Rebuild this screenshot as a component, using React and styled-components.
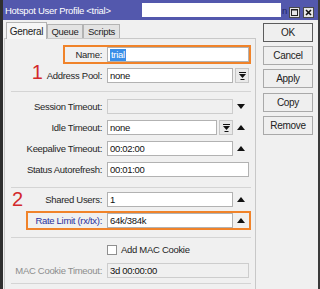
import React from "react";
import styled, { createGlobalStyle } from "styled-components";

const GlobalStyle = createGlobalStyle`
  html, body {
    margin: 0;
    padding: 0;
    background: #f0f0f0;
  }
  body {
    font-family: "Liberation Sans", Arial, sans-serif;
    font-size: 9.5px;
    letter-spacing: -0.3px;
    color: #1e1e1e;
  }
`;

const Window = styled.div`
    width: 320px;
    height: 289px;
    box-sizing: border-box;
    border-left: 3px solid #2f2f2f;
    border-right: 2px solid #3a3a3a;
    background: #f0f0f0;
    overflow: hidden;
    display: flex;
    flex-direction: column;
`;

const TitleBar = styled.div`
    height: 20px;
    flex-shrink: 0;
    background: #5358ad;
    display: flex;
    align-items: center;
    padding: 0 4px 0 2px;
`;

const TitleText = styled.div`
    color: #ffffff;
    white-space: nowrap;
`;

const TitleField = styled.div`
    margin-left: auto;
    width: 139px;
    height: 14px;
    background: #ffffff;
`;

const TitleTail = styled.div`
    color: #1f2466;
    margin-left: 1px;
    width: 6px;
`;

const WinButtons = styled.div`
    display: flex;
    gap: 3px;
    margin-left: 1px;
    align-self: flex-start;
    margin-top: 7px;
`;

const WinButton = styled.div`
    width: 11px;
    height: 11px;
    box-sizing: border-box;
    border: 1px solid #4a4a4a;
    background: #e6e6e6;
    display: flex;
    align-items: center;
    justify-content: center;
`;

const Body = styled.div`
    display: flex;
    flex: 1;
    min-height: 0;
`;

const Main = styled.div`
    width: 252px;
    margin-left: 1px;
    display: flex;
    flex-direction: column;
`;

const Tabs = styled.div`
    display: flex;
    align-items: flex-end;
    height: 17px;
    margin: 2px 0 -1px;
    padding-left: 2px;
    position: relative;
    z-index: 1;
`;

const Tab = styled.div`
    width: ${p => p.$width}px;
    height: ${p => p.$active ? 17 : 14}px;
    margin-bottom: ${p => p.$active ? 0 : 1}px;
    box-sizing: border-box;
    border: 1px solid #b3b3b3;
    border-bottom: none;
    background: ${p => p.$active ? "#f6f6f6" : "#e3e3e3"};
    display: flex;
    align-items: center;
    justify-content: center;
    font-size: ${p => p.$active ? "10px" : "9.5px"};
`;

const Panel = styled.div`
    flex: 1;
    border: 1px solid #c8c8c8;
    border-bottom: none;
    background: #f0f0f0;
    padding-top: 6px;
    display: flex;
    flex-direction: column;
`;

const Section = styled.div`
    display: flex;
    flex-direction: column;
    gap: 2px;
`;

const Separator = styled.div`
    height: 1px;
    background: #d4d4d4;
    margin: ${p => p.$above}px 4px ${p => p.$below}px 6px;
    flex-shrink: 0;
`;

const Field = styled.div`
    display: flex;
    align-items: center;
    height: 19px;
    flex-shrink: 0;
    box-sizing: border-box;
    margin: 0 4px 0 ${p => p.$left - 5}px;
    border: 2px solid ${p => p.$marked ? "#f0832a" : "transparent"};
`;

const Label = styled.div`
    width: ${p => 100 - p.$left}px;
    height: 15px;
    flex-shrink: 0;
    display: flex;
    align-items: center;
    justify-content: flex-end;
    white-space: nowrap;
    color: ${p => p.$tone === "link" ? "#2b309c" : p.$tone === "muted" ? "#8d8d8d" : "#262626"};
`;

const Mark = styled.span`
    font-size: 20px;
    line-height: 15px;
    letter-spacing: 0;
    color: #d3292b;
    position: relative;
    top: ${p => p.$raise ? -p.$raise : 0}px;
    margin-right: ${p => p.$far ? "auto" : "4px"};
    margin-left: ${p => p.$far ? "2px" : 0};
`;

const Controls = styled.div`
    flex: 1;
    height: 15px;
    margin-left: 5px;
    display: flex;
    align-items: center;
`;

const Input = styled.div`
    flex: 1;
    height: 15px;
    box-sizing: border-box;
    border: 1px solid ${p => p.$disabled ? "#cdcdcd" : "#b2b2b2"};
    background: ${p => p.$disabled ? "#f0f0f0" : "#ffffff"};
    display: flex;
    align-items: center;
    padding-left: 2px;
    white-space: nowrap;
    overflow: hidden;
    color: #111;
`;

const Selected = styled.span`
    background: #3a8ee8;
    color: #ffffff;
    padding: 0 1px;
    line-height: 12px;
`;

const DropButton = styled.div`
    width: 14px;
    height: 15px;
    margin-left: 2px;
    box-sizing: border-box;
    border: 1px solid #c6c6c6;
    background: #e9e9e9;
    display: flex;
    align-items: center;
    justify-content: center;
    flex-shrink: 0;
`;

const ArrowSlot = styled.div`
    width: 16px;
    height: 15px;
    display: flex;
    align-items: center;
    justify-content: center;
    flex-shrink: 0;
`;

const Checkbox = styled.div`
    width: 10px;
    height: 10px;
    box-sizing: border-box;
    border: 1px solid #8f8f8f;
    background: #ffffff;
    flex-shrink: 0;
`;

const CheckText = styled.span`
    margin-left: 4px;
    white-space: nowrap;
`;

const Side = styled.div`
    display: flex;
    flex-direction: column;
    gap: 4px;
    padding: 3px 0 0 7px;
`;

const Button = styled.div`
    width: 50px;
    height: 19px;
    box-sizing: border-box;
    border: 1px solid ${p => p.$primary ? "#5c5c5c" : "#a9a9a9"};
    background: #efefef;
    display: flex;
    align-items: center;
    justify-content: center;
    font-size: 10px;
    color: #222;
    margin-top: ${p => p.$spaced ? 1 : 0}px;
`;

const DropIcon = () => (
    <svg width="7" height="8" viewBox="0 0 7 8">
        <rect x="0" y="0" width="7" height="1" fill="#111" />
        <polygon points="0,2 7,2 3.5,6" fill="#111" />
        <rect x="1.5" y="7" width="4" height="1" fill="#111" />
    </svg>
);

const Arrow = ({ up }) => (
    <ArrowSlot>
        <svg width="8" height="5" viewBox="0 0 8 5">
            <polygon points={up ? "0,5 8,5 4,0" : "0,0 8,0 4,5"} fill="#111" />
        </svg>
    </ArrowSlot>
);

const App = () => {
    return (
        <Window>
            <GlobalStyle />
            <TitleBar>
                <TitleText>Hotspot User Profile &lt;trial&gt;</TitleText>
                <TitleField />
                <TitleTail>n</TitleTail>
                <WinButtons>
                    <WinButton>
                        <svg width="7" height="7" viewBox="0 0 7 7">
                            <rect x="0.5" y="0.5" width="6" height="6" fill="none" stroke="#222" />
                            <rect x="0.5" y="0.5" width="6" height="1" fill="#222" />
                        </svg>
                    </WinButton>
                    <WinButton>
                        <svg width="7" height="7" viewBox="0 0 7 7">
                            <path d="M1 1 L6 6 M6 1 L1 6" stroke="#111" strokeWidth="1.6" />
                        </svg>
                    </WinButton>
                </WinButtons>
            </TitleBar>

            <Body>
                <Main>
                    <Tabs>
                        <Tab $active $width={41}>General</Tab>
                        <Tab $width={36}>Queue</Tab>
                        <Tab $width={37}>Scripts</Tab>
                    </Tabs>
                    <Panel>
                        <Section>
                            <Field $left={63} $marked>
                                <Label $left={63}>Name:</Label>
                                <Controls>
                                    <Input><Selected>trial</Selected></Input>
                                </Controls>
                            </Field>
                            <Field $left={8}>
                                <Label $left={8}><Mark $raise={3}>1</Mark>Address Pool:</Label>
                                <Controls>
                                    <Input>none</Input>
                                    <DropButton><DropIcon /></DropButton>
                                </Controls>
                            </Field>
                        </Section>

                        <Separator $above={6} $below={5} />

                        <Section>
                            <Field $left={8}>
                                <Label $left={8}>Session Timeout:</Label>
                                <Controls>
                                    <Input $disabled />
                                    <Arrow />
                                </Controls>
                            </Field>
                            <Field $left={8}>
                                <Label $left={8}>Idle Timeout:</Label>
                                <Controls>
                                    <Input>none</Input>
                                    <DropButton><DropIcon /></DropButton>
                                    <Arrow up />
                                </Controls>
                            </Field>
                            <Field $left={8}>
                                <Label $left={8}>Keepalive Timeout:</Label>
                                <Controls>
                                    <Input>00:02:00</Input>
                                    <Arrow up />
                                </Controls>
                            </Field>
                            <Field $left={8}>
                                <Label $left={8}>Status Autorefresh:</Label>
                                <Controls>
                                    <Input>00:01:00</Input>
                                </Controls>
                            </Field>
                        </Section>

                        <Separator $above={8} $below={2} />

                        <Section>
                            <Field $left={8}>
                                <Label $left={8}><Mark $far>2</Mark>Shared Users:</Label>
                                <Controls>
                                    <Input>1</Input>
                                    <Arrow up />
                                </Controls>
                            </Field>
                            <Field $left={26} $marked>
                                <Label $left={26} $tone="link">Rate Limit (rx/tx):</Label>
                                <Controls>
                                    <Input>64k/384k</Input>
                                    <Arrow up />
                                </Controls>
                            </Field>
                        </Section>

                        <Separator $above={7} $below={2} />

                        <Section>
                            <Field $left={8}>
                                <Label $left={8} />
                                <Controls>
                                    <Checkbox />
                                    <CheckText>Add MAC Cookie</CheckText>
                                </Controls>
                            </Field>
                            <Field $left={8}>
                                <Label $left={8} $tone="muted">MAC Cookie Timeout:</Label>
                                <Controls>
                                    <Input $disabled>3d 00:00:00</Input>
                                </Controls>
                            </Field>
                        </Section>

                        <Separator $above={3} $below={0} />
                    </Panel>
                </Main>

                <Side>
                    <Button $primary>OK</Button>
                    <Button>Cancel</Button>
                    <Button>Apply</Button>
                    <Button $spaced>Copy</Button>
                    <Button>Remove</Button>
                </Side>
            </Body>
        </Window>
    );
};

export default App;
